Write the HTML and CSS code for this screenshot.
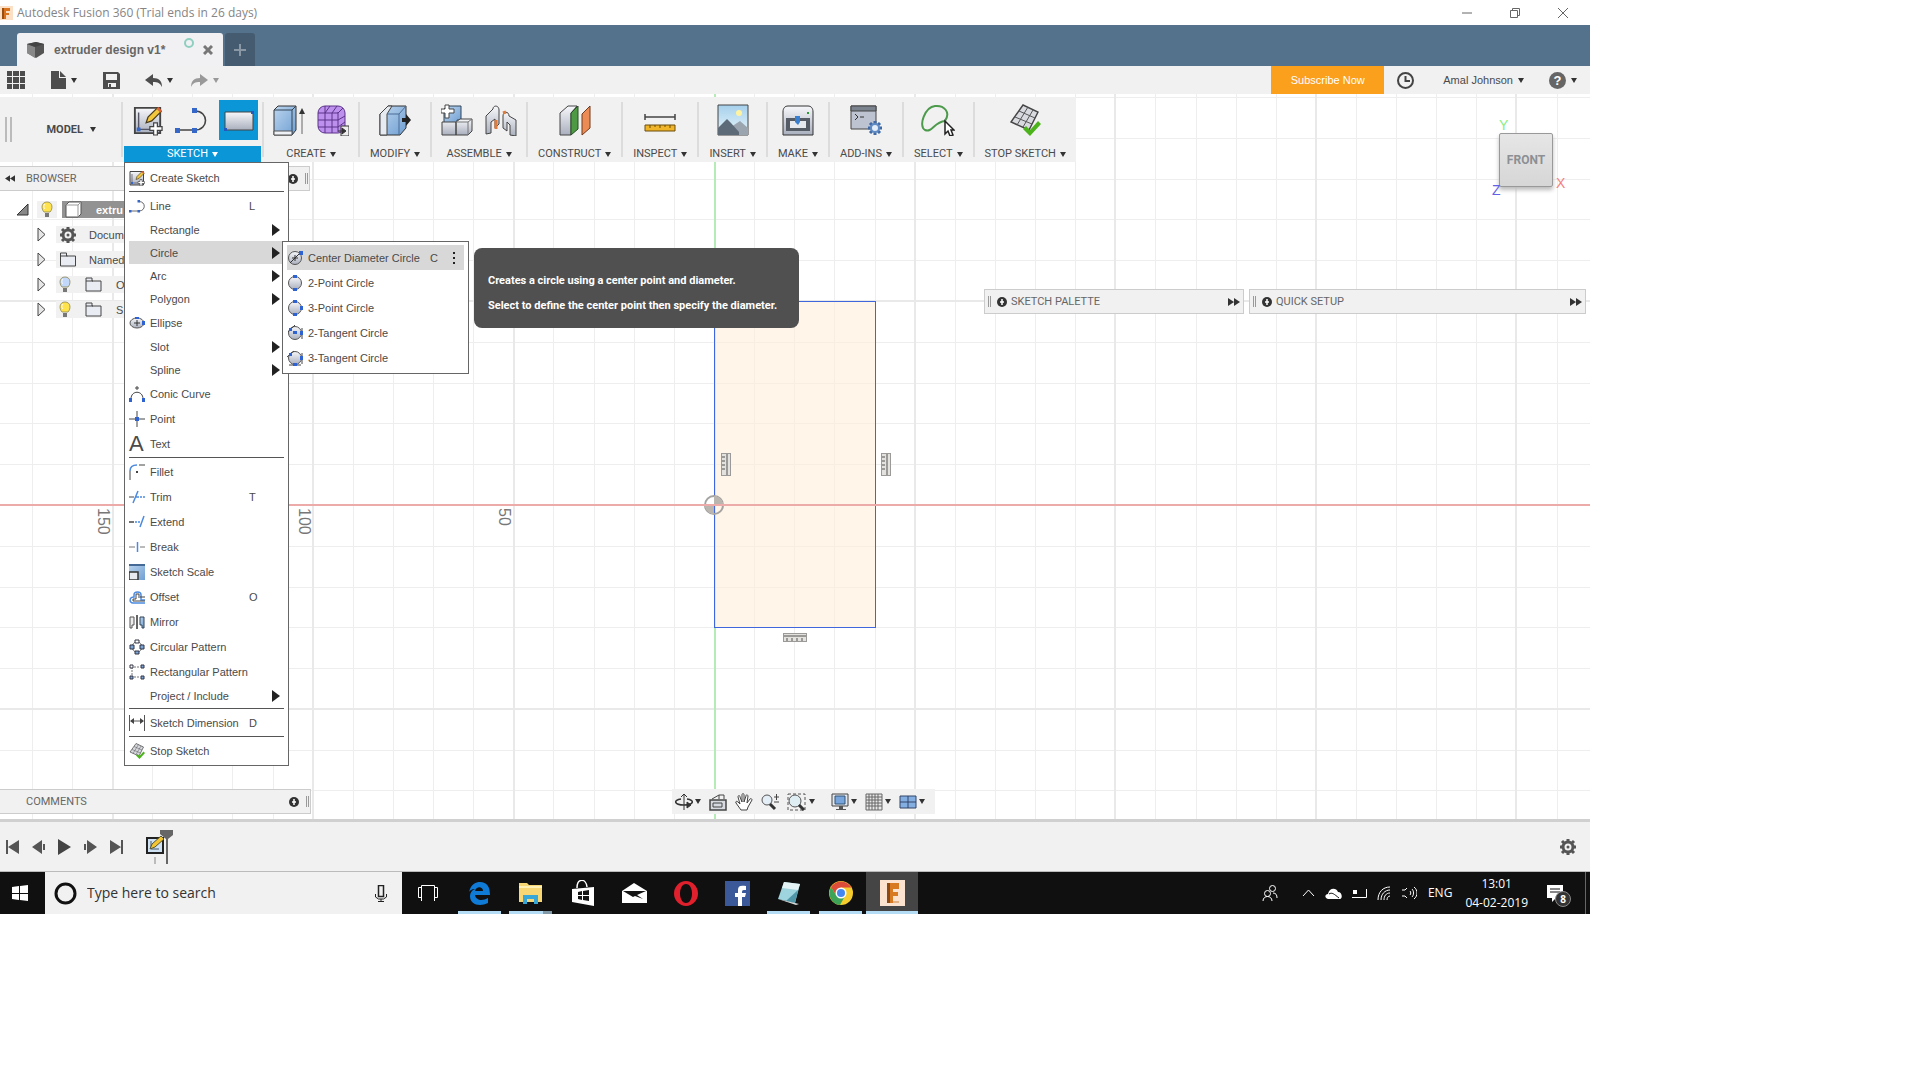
FILE: index.html
```html
<!DOCTYPE html>
<html lang="en">
<head>
    <meta charset="UTF-8">
    <meta name="viewport" content="width=device-width, initial-scale=1.0">
    <title>Autodesk Fusion 360</title>
    <link rel="stylesheet" href="styles.css">
</head>
<body>
    <svg class="sprite" aria-hidden="true">
      <defs>
        <linearGradient id="blue" x1="0" y1="0" x2="1" y2="1">
          <stop offset="0" stop-color="#bcd5ef"/><stop offset="1" stop-color="#6f9fd2"/>
        </linearGradient>
        <linearGradient id="steel" x1="0" y1="0" x2="0" y2="1">
          <stop offset="0" stop-color="#f7f8fb"/><stop offset="1" stop-color="#a9afbd"/>
        </linearGradient>
        <linearGradient id="sky" x1="0" y1="0" x2="0" y2="1">
          <stop offset="0" stop-color="#a5d0ec"/><stop offset="1" stop-color="#e8f5fa"/>
        </linearGradient>
      </defs>
      <symbol id="i-sketch" viewBox="0 0 32 32">
        <path d="M2 3h27v27H2z" fill="url(#steel)" stroke="#444" stroke-width="2"/>
        <path d="M6 8v18h16" fill="none" stroke="#556" stroke-width="1.500"/>
        <path d="M4 24h4v4H4z" fill="#3567c8"/>
        <path d="M14 19l2-6L26 3l4 4-10 10z" fill="#f3c73c" stroke="#4a3b1c" stroke-width="1.3"/>
        <path d="M25 4l2-2 4 4-2 2z" fill="#d9643a"/>
        <path d="M22 19h4v4h5v4h-5v5h-4v-5h-4v-4h4z" fill="#fff" stroke="#444" stroke-width="1.3"/>
      </symbol>
      <symbol id="i-line" viewBox="0 0 32 32">
        <path d="M3 26h17c14 0 14-19 0-19" fill="none" stroke="#444" stroke-width="1.6"/>
        <path d="M0 24h5v5H0zM17 24h5v5h-5zM17 4h5v5h-5z" fill="#3567c8"/>
      </symbol>
      <symbol id="i-stop" viewBox="0 0 32 32">
        <path d="M14 1l15 7-9 18L2 18z" fill="#d8dae0" stroke="#444" stroke-width="1.4"/>
        <path d="M19 3L8 21M24 6l-10 17M10 7l16 7M6 13l17 7" stroke="#555" fill="none"/>
        <path d="M14 25l3-3 4 4 8-9 3 3-11 12z" fill="#4db31d"/>
      </symbol>
      <symbol id="i-plus" viewBox="0 0 10 10">
        <circle cx="5" cy="5" r="5" fill="#333"/><path d="M5 2v6M3 5h4" stroke="#fff" stroke-width="1.500"/>
      </symbol>
      <symbol id="i-arrows" viewBox="0 0 12 8">
        <path d="M0 0l6 4-6 4zM6 0l6 4-6 4z" fill="#333"/>
      </symbol>
      <symbol id="i-gear" viewBox="0 0 18 18">
        <path d="M9 1v16M1 9h16M3 3l12 12M15 3L3 15" stroke="#555" stroke-width="3"/>
        <circle cx="9" cy="9" r="5" fill="#f1f1f1" stroke="#555" stroke-width="3"/><circle cx="9" cy="9" r="1.500" fill="#555"/>
      </symbol>
      <symbol id="i-bulb" viewBox="0 0 12 17">
        <path d="M3 11C0 8 0 1 6 1s6 7 3 10z" fill="currentColor" stroke="#8a8450" stroke-width=".8"/>
        <path d="M4 3c-2 2-1 4 0 5" stroke="#fff" fill="none"/><path d="M4 12h4v4H4z" fill="#777"/>
      </symbol>
      <symbol id="i-folder" viewBox="0 0 17 15">
        <path d="M1 3V1h6v3h9v10H1z" fill="#e9edf3" stroke="#444"/><path d="M1 4h7" stroke="#444"/>
      </symbol>
      <symbol id="i-expand" viewBox="0 0 9 15">
        <path d="M1 1l7 6.500L1 14z" fill="#e6e6e6" stroke="#444"/>
      </symbol>
      <symbol id="i-circle" viewBox="0 0 16 16">
        <circle cx="8" cy="8" r="6.500" fill="url(#steel)" stroke="#555"/>
      </symbol>
    </svg>

    <div class="app">
      <header class="titlebar">
        <svg class="logo" width="13" height="14" viewBox="0 0 13 14"><path d="M0 0h13v14H0z" fill="#fbe0c6"/><path d="M2 2h8v3H6v2h3v2H6v4H2z" fill="#d9731d"/><path d="M2 2h2v11H2z" fill="#9a4d12"/></svg>
        <h1>Autodesk Fusion 360 (Trial ends in 26 days)</h1>
        <div class="window-buttons">
          <button aria-label="Minimize"><svg width="10" height="10"><path d="M0 5h10" stroke="#666"/></svg></button>
          <button aria-label="Restore"><svg width="10" height="10" fill="none" stroke="#666"><path d="M.500 2.500h7v7h-7zM2.500 2V.500h7v7H8"/></svg></button>
          <button aria-label="Close"><svg width="10" height="10" stroke="#666"><path d="M0 0l10 10M10 0L0 10"/></svg></button>
        </div>
      </header>

      <nav class="tabs">
        <div class="tab">
          <svg width="17" height="16" viewBox="0 0 17 16"><path d="M0 2l9-2 8 2v9l-8 5-9-5z" fill="#555"/><path d="M0 2l8 3v11l-8-5z" fill="#888"/><path d="M0 2l9-2 8 2-9 3z" fill="#444"/></svg>
          <a href="#">extruder design v1*</a>
          <span class="tab-status"></span>
          <button aria-label="Close tab"><svg width="10" height="10" stroke="#777" stroke-width="3"><path d="M1 1l8 8M9 1L1 9"/></svg></button>
        </div>
        <button class="tab-new" aria-label="New tab"><svg width="12" height="12" stroke="#8a98a5" stroke-width="2"><path d="M6 0v12M0 6h12"/></svg></button>
      </nav>

      <div class="quickbar">
        <button class="q-grid" aria-label="Data panel"><svg width="18" height="18" fill="#4d4d4d"><path d="M0 0h5v5H0zM6 0h6v5H6zM13 0h5v5h-5zM0 6h5v6H0zM6 6h6v6H6zM13 6h5v6h-5zM0 13h5v5H0zM6 13h6v5H6zM13 13h5v5h-5z"/></svg></button>
        <button class="q-file" aria-label="File"><svg width="15" height="18" fill="#4d4d4d"><path d="M0 0h8v7h7v11H0z"/><path d="M9 0l6 6H9z"/></svg><i class="caret"></i></button>
        <button class="q-save" aria-label="Save"><svg width="17" height="17"><path d="M0 0h15l2 2v15H0z" fill="#4d4d4d"/><path d="M3 2h11v6H3zM5 11h8v4H5z" fill="#f1f1f1"/><path d="M6 12h2v3H6z" fill="#4d4d4d"/></svg></button>
        <button class="q-undo" aria-label="Undo"><svg width="17" height="13" fill="#4d4d4d"><path d="M0 6l8-6v4c6 0 9 3 9 9-2-4-4-5-9-5v4z"/></svg><i class="caret"></i></button>
        <button class="q-redo" aria-label="Redo"><svg width="17" height="13" fill="#999"><path d="M17 6L9 0v4C3 4 0 7 0 13c2-4 4-5 9-5v4z"/></svg><i class="caret"></i></button>
        <button class="subscribe">Subscribe Now</button>
        <button class="q-clock" aria-label="Job status"><svg width="17" height="17" fill="none" stroke="#444" stroke-width="2"><circle cx="8.500" cy="8.500" r="7.500"/><path d="M8.500 4v5H13"/></svg></button>
        <button class="user">Amal Johnson<i class="caret"></i></button>
        <button class="help"><b>?</b><i class="caret"></i></button>
      </div>

      <main class="workspace">
        <svg class="scene">
          <path class="minor" d="M32 0v726M72 0v726M152 0v726M192 0v726M232 0v726M273 0v726M353 0v726M393 0v726M433 0v726M473 0v726M553 0v726M594 0v726M634 0v726M674 0v726M754 0v726M794 0v726M834 0v726M875 0v726M955 0v726M995 0v726M1035 0v726M1075 0v726M1155 0v726M1196 0v726M1236 0v726M1276 0v726M1356 0v726M1396 0v726M1436 0v726M1476 0v726M1557 0v726"/>
          <path class="minor" d="M0 3h1590M0 44h1590M0 85h1590M0 125h1590M0 166h1590M0 248h1590M0 289h1590M0 329h1590M0 370h1590M0 452h1590M0 493h1590M0 533h1590M0 574h1590M0 656h1590M0 696h1590"/>
          <path class="major" d="M113 0v726M313 0v726M514 0v726M915 0v726M1115 0v726M1316 0v726M1516 0v726M0 207h1590M0 615h1590"/>
          <path d="M715 0v726" stroke="#b5ecb5" stroke-width="2"/>
          <path class="profile" d="M714 207h161v326H714z"/>
          <g fill="none" stroke="#a5a3a1" stroke-width="2">
            <circle cx="714" cy="411" r="9"/>
            <path d="M714 411v-9a9 9 0 0 1 9 9zM714 411v9a9 9 0 0 1-9-9z" fill="#bbb5af" stroke="none"/>
          </g>
          <path d="M0 411h1590" stroke="#ecaaa8" stroke-width="2"/>
          <g fill="#e4e2df" stroke="#9b9a98">
            <path d="M721 359h9v22h-9zM881 359h9v22h-9zM783 539h23v8h-23z"/>
            <path d="M727 359v22M887 359v22M783 542h23M721 363h4M721 367h4M721 371h4M721 375h4M881 363h4M881 367h4M881 371h4M881 375h4M787 544v3M792 544v3M797 544v3M802 544v3" stroke-width="2"/>
          </g>
          <g class="scale-text">
            <text transform="translate(98 414) rotate(90)">150</text>
            <text transform="translate(299 414) rotate(90)">100</text>
            <text transform="translate(499 414) rotate(90)">50</text>
          </g>
        </svg>

        <div class="ribbon">
          <div class="group model">
            <svg class="grip" width="7" height="25" stroke="#bbb" stroke-width="2"><path d="M1 0v25M6 0v25"/></svg>
            <button class="label"><b>MODEL</b><i class="caret"></i></button>
          </div>
          <span class="sep"></span>

          <div class="group sketch">
            <div class="tools">
              <button class="tool" aria-label="Create Sketch"><svg width="30" height="32"><use href="#i-sketch"/></svg></button>
              <button class="tool" aria-label="Line"><svg width="32" height="32"><use href="#i-line"/></svg></button>
              <button class="tool active" aria-label="Rectangle"><svg width="32" height="32"><path d="M2 8h28v18H2z" fill="url(#steel)" stroke="#444"/><path d="M28 7h3v3h-3zM1 24h3v3H1z" fill="#2559c0"/></svg></button>
            </div>
            <button class="label">SKETCH<i class="caret"></i></button>

            <ul class="menu">
              <li><button><svg><use href="#i-sketch"/></svg><span>Create Sketch</span></button></li>
              <li class="rule"></li>
              <li><button><svg><use href="#i-line"/></svg><span>Line</span><kbd>L</kbd></button></li>
              <li class="plain"><button><span>Rectangle</span><i class="more"></i></button></li>
              <li class="plain open">
                <button><span>Circle</span><i class="more"></i></button>
                <ul class="submenu">
                  <li class="current">
                    <button><svg viewBox="0 0 16 16"><use href="#i-circle"/><path d="M3 13L14 2M8 5v6M5 8h6" stroke="#333"/><path d="M12 1h4v4h-4z" fill="#2e62d0"/></svg><span>Center Diameter Circle</span><kbd>C</kbd><i class="dots"></i></button>
                    <div class="tooltip">
                      <p>Creates a circle using a center point and diameter.</p>
                      <p>Select to define the center point then specify the diameter.</p>
                    </div>
                  </li>
                  <li><button><svg viewBox="0 0 16 16"><use href="#i-circle"/><path d="M6 0h4v3H6zM6 13h4v3H6z" fill="#2e62d0"/></svg><span>2-Point Circle</span></button></li>
                  <li><button><svg viewBox="0 0 16 16"><use href="#i-circle"/><path d="M6 0h4v3H6zM6 13h4v3H6zM13 6h3v4h-3z" fill="#2e62d0"/></svg><span>3-Point Circle</span></button></li>
                  <li><button><svg viewBox="0 0 16 16"><use href="#i-circle"/><path d="M1 7l7-7M15 3v11" stroke="#444"/><path d="M6 6h4v3H6zM2 3h3v3H2zM13 6h3v4h-3z" fill="#2e62d0"/></svg><span>2-Tangent Circle</span></button></li>
                  <li><button><svg viewBox="0 0 16 16"><use href="#i-circle"/><path d="M0 7l7-6M15 3v11M2 15h12" stroke="#444"/><path d="M6 13h4v3H6zM2 3h3v3H2zM13 6h3v4h-3z" fill="#2e62d0"/></svg><span>3-Tangent Circle</span></button></li>
                </ul>
              </li>
              <li class="plain"><button><span>Arc</span><i class="more"></i></button></li>
              <li class="plain"><button><span>Polygon</span><i class="more"></i></button></li>
              <li><button><svg viewBox="0 0 16 16"><ellipse cx="8" cy="8" rx="7" ry="5" fill="url(#steel)" stroke="#555"/><path d="M8 5v6M5 8h6" stroke="#333"/><path d="M6 2h4v2H6zM13 6h3v4h-3z" fill="#2e62d0"/></svg><span>Ellipse</span></button></li>
              <li class="plain"><button><span>Slot</span><i class="more"></i></button></li>
              <li class="plain"><button><span>Spline</span><i class="more"></i></button></li>
              <li><button><svg viewBox="0 0 16 16"><path d="M2 13C2 4 14 4 14 13M8 0v4M6 2h4" fill="none" stroke="#444"/><path d="M0 12h3v4H0zM13 12h3v4h-3z" fill="#2e62d0"/></svg><span>Conic Curve</span></button></li>
              <li><button><svg viewBox="0 0 16 16"><path d="M8 0v16M0 8h16" stroke="#444"/><path d="M6 6h4v4H6z" fill="#2e62d0"/></svg><span>Point</span></button></li>
              <li><button><em>A</em><span>Text</span></button></li>
              <li class="rule"></li>
              <li><button><svg viewBox="0 0 16 16"><path d="M1 16V7" stroke="#444"/><path d="M1 7c0-4 2-6 7-6" fill="none" stroke="#4c8ae0" stroke-width="1.500"/><path d="M10 1h6" stroke="#444"/><path d="M7 7h2v2H7z" fill="#444"/></svg><span>Fillet</span></button></li>
              <li><button><svg viewBox="0 0 16 16"><path d="M0 8h5" stroke="#444"/><path d="M4 14l5-12M7 8h3M11 8h2M14 8h2" stroke="#4c8ae0" stroke-width="1.500"/></svg><span>Trim</span><kbd>T</kbd></button></li>
              <li><button><svg viewBox="0 0 16 16"><path d="M0 8h5" stroke="#444" stroke-width="1.500"/><path d="M6 8h2M9 8h2M11 13l4-11" stroke="#4c8ae0" stroke-width="1.500"/></svg><span>Extend</span></button></li>
              <li><button><svg viewBox="0 0 16 16"><path d="M0 8h6M11 8h5" stroke="#777"/><path d="M8.500 3v10" stroke="#4c8ae0" stroke-width="1.500"/></svg><span>Break</span></button></li>
              <li><button><svg viewBox="0 0 16 16"><path d="M0 0h16v16H0z" fill="url(#blue)"/><path d="M0 0h16v2H0z" fill="#456a96"/><path d="M0 8h9v8H0z" fill="#e6eaf0" stroke="#333" stroke-width="1.500"/></svg><span>Sketch Scale</span></button></li>
              <li><button><svg viewBox="0 0 16 16" fill="none"><path d="M16 11h-4V6c0-4-7-4-7 0v2c-5 0-5 6-1 6h12" stroke="#4c8ae0" stroke-width="1.500"/><path d="M16 8h-5M10 9V5H7v5H4v2h12" stroke="#444"/></svg><span>Offset</span><kbd>O</kbd></button></li>
              <li><button><svg viewBox="0 0 16 16"><path d="M8 1v14" stroke="#333" stroke-width="1.500"/><path d="M1 3h4v8H3v3H1z" fill="#eee" stroke="#555"/><path d="M15 3h-4v8h2v3h2z" fill="url(#blue)" stroke="#345"/></svg><span>Mirror</span></button></li>
              <li><button><svg viewBox="0 0 16 16" fill="#7ba6d8" stroke="#334"><circle cx="8" cy="8" r="5" fill="none" stroke="#777"/><path d="M6 1h4v3H6z" fill="#fff"/><path d="M1 6h4v4H1zM11 6h4v4h-4zM6 12h4v3H6z"/></svg><span>Circular Pattern</span></button></li>
              <li><button><svg viewBox="0 0 16 16" fill="#7ba6d8" stroke="#334"><path d="M3 3v10M5 3h6M5 13h6" fill="none" stroke="#777" stroke-dasharray="2 1"/><path d="M1 1h3v3H1z" fill="#fff"/><path d="M12 1h3v3h-3zM1 12h3v3H1zM12 12h3v3h-3z"/></svg><span>Rectangular Pattern</span></button></li>
              <li class="plain"><button><span>Project / Include</span><i class="more"></i></button></li>
              <li class="rule"></li>
              <li><button><svg viewBox="0 0 16 16"><path d="M.500 0v16M15.500 0v16M2 6h12" stroke="#555"/><path d="M1 6l4-3v6zM15 6l-4-3v6z" fill="#444"/></svg><span>Sketch Dimension</span><kbd>D</kbd></button></li>
              <li class="rule"></li>
              <li><button><svg><use href="#i-stop"/></svg><span>Stop Sketch</span></button></li>
            </ul>
          </div>
          <span class="sep"></span>

          <div class="group pair">
            <div class="tools">
              <button class="tool" aria-label="Extrude"><svg width="32" height="32"><path d="M1 6l4-4h18v24l-4 5H1z" fill="url(#blue)" stroke="#333"/><path d="M1 6h18v25M19 6l4-4" fill="none" stroke="#345"/><path d="M1 27h18v4H1z" fill="#eef1f6" stroke="#555"/><path d="M29 8v22" stroke="#666"/><path d="M26 10l3-6 3 6z" fill="#333"/></svg></button>
              <button class="tool" aria-label="Create Form"><svg width="32" height="32"><rect x="1" y="2" width="27" height="27" rx="7" fill="#bd90ee" stroke="#5a3388"/><path d="M8 2v27M15 9v20M21 8v20M1 9h20l5-5M1 16h20l7-4M1 23h20l7-5M8 9l5-7M15 9l5-7" fill="none" stroke="#5a3388"/><path d="M24 22h8v10h-8z" fill="#eee" stroke="#333"/><path d="M21 27h6M25 24l4 3-4 3z" stroke="#333" fill="#333"/></svg></button>
            </div>
            <button class="label">CREATE<i class="caret"></i></button>
          </div>
          <span class="sep"></span>
          <div class="group">
            <div class="tools">
              <button class="tool" aria-label="Press Pull"><svg width="32" height="32"><path d="M1 10l8-8h18v22l-6 7H1z" fill="url(#blue)" stroke="#333"/><path d="M1 10l8-8h4l-5 8v21H1z" fill="#e6ebf2" stroke="#444"/><path d="M8 10h12v21M20 10l7-8" fill="none" stroke="#4a6c96"/><path d="M23 14h4v-4l5 6-5 6v-4h-4z" fill="#222"/></svg></button>
            </div>
            <button class="label">MODIFY<i class="caret"></i></button>
          </div>
          <span class="sep"></span>
          <div class="group pair">
            <div class="tools">
              <button class="tool" aria-label="New Component"><svg width="32" height="32"><path d="M3 5l3-3h14v14h-4v3H3z" fill="url(#blue)" stroke="#345"/><path d="M1 18h14v13H1zM15 18l4-3h12v12l-4 4H15z" fill="url(#steel)" stroke="#444"/><path d="M15 18h12v13M27 18l4-3" fill="none" stroke="#777"/><path d="M4 1h4v4h5v4H8v5H4V9H0V5h4z" fill="#fff" stroke="#444"/></svg></button>
              <button class="tool" aria-label="Joint"><svg width="32" height="32"><path d="M1 12L8 5c0-4 6-4 6 1v14l-4 4v-9l-4 3v11l-5 1z" fill="url(#steel)" stroke="#444"/><path d="M31 16l-7-4c0-5-6-5-6 0v12l4 3v-9l3 3v10l6 1z" fill="url(#steel)" stroke="#444"/><path d="M11 16v9M18 9l3-1" stroke="#df7c3d" stroke-width="3"/></svg></button>
            </div>
            <button class="label">ASSEMBLE<i class="caret"></i></button>
          </div>
          <span class="sep"></span>
          <div class="group">
            <div class="tools">
              <button class="tool" aria-label="Offset Plane"><svg width="32" height="32"><path d="M1 9l8-7h9l-6 7v22H1z" fill="url(#steel)" stroke="#444"/><path d="M12 9l7-7v23l-7 6z" fill="#4e9a44" stroke="#264f22"/><path d="M23 10l8-8v22l-8 7z" fill="#ed8b54" stroke="#6f3a1d"/></svg></button>
            </div>
            <button class="label">CONSTRUCT<i class="caret"></i></button>
          </div>
          <span class="sep"></span>
          <div class="group">
            <div class="tools">
              <button class="tool" aria-label="Measure"><svg width="32" height="32"><path d="M1 13h30M1 10v6M31 10v6" stroke="#444" stroke-width="1.500"/><path d="M1 21h30v6H1z" fill="#f0b429" stroke="#6b4d0d"/><path d="M6 21v3M11 21v2M16 21v3M21 21v2M26 21v3" stroke="#6b4d0d"/></svg></button>
            </div>
            <button class="label">INSPECT<i class="caret"></i></button>
          </div>
          <span class="sep"></span>
          <div class="group">
            <div class="tools">
              <button class="tool" aria-label="Insert image"><svg width="32" height="32"><path d="M1 1h30v30H1z" fill="url(#sky)" stroke="#444"/><circle cx="22" cy="9" r="3" fill="#fff3a0"/><path d="M14 23l9-6 8 7v7H14z" fill="#9aa5b0"/><path d="M1 24l9-9 4 4 8 9v3H1z" fill="#5d6a78"/></svg></button>
            </div>
            <button class="label">INSERT<i class="caret"></i></button>
          </div>
          <span class="sep"></span>
          <div class="group">
            <div class="tools">
              <button class="tool" aria-label="3D Print"><svg width="32" height="32"><path d="M1 8c0-4 2-6 5-6h20c3 0 5 2 5 6v23H1z" fill="url(#steel)" stroke="#333"/><path d="M4 14h24v13H4z" fill="#555c66"/><path d="M8 17h16v7H8z" fill="#e6e9ee"/><path d="M13 12h5v6l-2 3-3-3z" fill="#397fd1"/><path d="M25 8h2v2h-2z" fill="#2b9c37"/></svg></button>
            </div>
            <button class="label">MAKE<i class="caret"></i></button>
          </div>
          <span class="sep"></span>
          <div class="group">
            <div class="tools">
              <button class="tool" aria-label="Scripts and Add-Ins"><svg width="32" height="32"><path d="M1 2h25v23H1z" fill="#bdc3d1" stroke="#444"/><path d="M1 2h25v5H1z" fill="#7b838f" stroke="#444"/><path d="M5 10l3 3-3 3M10 13h4" fill="none" stroke="#333"/><path d="M25 17v14M18 24h14M20 19l10 10M30 19L20 29" stroke="#3f6aa6" stroke-width="3"/><circle cx="25" cy="24" r="4" fill="#e4edf8" stroke="#5f8ac3" stroke-width="2"/></svg></button>
            </div>
            <button class="label">ADD-INS<i class="caret"></i></button>
          </div>
          <span class="sep"></span>
          <div class="group">
            <div class="tools">
              <button class="tool" aria-label="Select"><svg width="34" height="32"><path d="M24 17c6-9-1-16-10-15C4 3-3 22 4 26c7 3 9-8 20-9z" fill="none" stroke="#4c9a4c" stroke-width="2"/><path d="M24 17v13l3-3 2 5 3-1-2-5h3z" fill="#fff" stroke="#222" stroke-width="1.500"/></svg></button>
            </div>
            <button class="label">SELECT<i class="caret"></i></button>
          </div>
          <span class="sep"></span>
          <div class="group">
            <div class="tools">
              <button class="tool" aria-label="Stop Sketch"><svg width="32" height="32"><use href="#i-stop"/></svg></button>
            </div>
            <button class="label">STOP SKETCH<i class="caret"></i></button>
          </div>
        </div>

        <div class="stage">
          <aside class="browser">
            <div class="panel">
              <svg class="flip" width="10" height="7"><use href="#i-arrows"/></svg>
              <span class="panel-title">BROWSER</span>
              <svg class="push" width="10" height="10"><use href="#i-plus"/></svg>
              <i class="grip-line"></i>
            </div>
            <ul class="tree">
              <li class="root"><svg width="12" height="12"><path d="M11 0v11H0z" fill="#888" stroke="#333"/></svg><span class="bulb on"><svg width="12" height="17"><use href="#i-bulb"/></svg></span><div class="node"><svg width="17" height="17" viewBox="0 0 17 17"><path d="M1 4l3-3h12v12l-3 3H1z" fill="#fff" stroke="#555"/><path d="M1 4h12v12M13 4l3-3" fill="none" stroke="#999"/></svg><b>extru</b></div></li>
              <li><svg width="9" height="15"><use href="#i-expand"/></svg><div class="node"><svg width="18" height="18"><use href="#i-gear"/></svg><span>Docum</span></div></li>
              <li><svg width="9" height="15"><use href="#i-expand"/></svg><div class="node"><svg width="18" height="15"><use href="#i-folder"/></svg><span>Named</span></div></li>
              <li class="deep"><svg width="9" height="15"><use href="#i-expand"/></svg><div class="node"><svg class="off" width="12" height="17"><use href="#i-bulb"/></svg><svg width="17" height="15"><use href="#i-folder"/></svg><span>O</span></div></li>
              <li class="deep"><svg width="9" height="15"><use href="#i-expand"/></svg><div class="node"><svg class="on" width="12" height="17"><use href="#i-bulb"/></svg><svg width="17" height="15"><use href="#i-folder"/></svg><span>S</span></div></li>
            </ul>
          </aside>

          <div class="palettes">
            <div class="panel">
              <i class="grip-line"></i>
              <svg width="10" height="10"><use href="#i-plus"/></svg>
              <span class="panel-title">SKETCH PALETTE</span>
              <svg class="push" width="12" height="8"><use href="#i-arrows"/></svg>
            </div>
            <div class="panel wide">
              <i class="grip-line"></i>
              <svg width="10" height="10"><use href="#i-plus"/></svg>
              <span class="panel-title">QUICK SETUP</span>
              <svg class="push" width="12" height="8"><use href="#i-arrows"/></svg>
            </div>
          </div>
        </div>

        <div class="viewcube">
          <div class="face">FRONT</div>
          <span class="axis-y">Y</span>
          <span class="axis-x">X</span>
          <span class="axis-z">Z</span>
        </div>

        <div class="bottom-row">
          <div class="panel comments">
            <span class="panel-title">COMMENTS</span>
            <svg class="push" width="10" height="10"><use href="#i-plus"/></svg>
            <i class="grip-line"></i>
          </div>
          <div class="navbar">
            <button aria-label="Orbit"><svg width="18" height="18" fill="none" stroke="#333"><path d="M9 1v16M6 4l3-3 3 3"/><path d="M12 6c8 1 7 6-3 6S-2 7 6 6" stroke-width="1.500"/><path d="M12 9l4 3-4 3z" fill="#333"/></svg><i class="caret"></i></button>
            <button aria-label="Look At"><svg width="18" height="18" fill="#d6dae0" stroke="#444"><path d="M1 7h16v10H1z" stroke-width="1.500"/><path d="M4 10h9v4H4z"/><path d="M3 6l7-4v4M10 2h5v4" fill="none"/></svg></button>
            <button aria-label="Pan"><svg width="18" height="18"><path d="M6 17L1 10c-1-2 1-2 2-1l2 2L3 4c0-2 2-2 2 0l2 5V2c0-2 2-2 2 0v7l2-6c0-2 2-1 2 0l-1 7 3-4c1-1 2 0 2 1l-4 7-1 3z" fill="#fff" stroke="#444"/></svg></button>
            <button aria-label="Zoom"><svg width="18" height="18"><circle cx="6" cy="7" r="5" fill="#e3eef6" stroke="#555"/><path d="M9 11l5 5" stroke="#333" stroke-width="3"/><path d="M13 4h5M15.500 1v6M13 9h5" stroke="#444"/></svg></button>
            <button aria-label="Fit"><svg width="20" height="18"><path d="M1 1h17v16H1z" fill="none" stroke="#555" stroke-dasharray="3 2"/><circle cx="8" cy="8" r="6" fill="#dfeef3" stroke="#555"/><path d="M12 12l5 5" stroke="#333" stroke-width="3"/></svg><i class="caret"></i></button>
            <button class="display" aria-label="Display Settings"><svg width="18" height="18"><path d="M1 1h16v12H1z" fill="#e3e6ea" stroke="#444"/><path d="M4 3h10v8H4z" fill="#78a5dc" stroke="#357"/><path d="M8 13h4v3h3v1H5v-1h3z" fill="#555"/></svg><i class="caret"></i></button>
            <button aria-label="Grid"><svg width="18" height="18" stroke="#666"><path d="M1 1h16v16H1z" fill="#e8e8e8"/><path d="M4 1v16M7 1v16M10 1v16M13 1v16M1 4h16M1 7h16M1 10h16M1 13h16"/></svg><i class="caret"></i></button>
            <button aria-label="Viewports"><svg width="18" height="14"><path d="M1 1h16v12H1z" fill="#83aee2" stroke="#346"/><path d="M9 1v12M1 7h16" stroke="#346"/></svg><i class="caret"></i></button>
          </div>
        </div>
      </main>

      <footer class="timeline">
        <button aria-label="Go to start"><svg width="13" height="14" fill="#555"><path d="M0 0h2v14H0zM13 0v14L2 7z"/></svg></button>
        <button aria-label="Step back"><svg width="13" height="14" fill="#555"><path d="M10 0v14L0 7zM11 4h2v6h-2z"/></svg></button>
        <button aria-label="Play"><svg width="13" height="16" fill="#444"><path d="M0 0l13 8-13 8z"/></svg></button>
        <button aria-label="Step forward"><svg width="13" height="14" fill="#555"><path d="M3 0v14l10-7zM0 4h2v6H0z"/></svg></button>
        <button aria-label="Go to end"><svg width="13" height="14" fill="#555"><path d="M11 0h2v14h-2zM0 0v14l11-7z"/></svg></button>
        <button class="feature" aria-label="Sketch1"><svg width="28" height="34"><path d="M1 8h16v15H1z" fill="#cfe2f3" stroke="#222" stroke-width="2"/><path d="M5 11v8h8" fill="none" stroke="#456"/><path d="M4 19l2-5 9-8 3 3-9 8z" fill="#f5c531" stroke="#553"/><path d="M8 27h2v7H8z" fill="#bbb"/><path d="M14 0h13v5l-5 4v25h-2V9l-6-5z" fill="#666"/></svg></button>
        <button class="settings" aria-label="Timeline settings"><svg width="18" height="18"><use href="#i-gear"/></svg></button>
      </footer>

      <div class="taskbar">
        <button class="start" aria-label="Start"><svg width="16" height="16" fill="#fff"><path d="M0 2l7-1v7H0zM8 1l8-1v8H8zM0 9h7v6l-7-1zM8 9h8v7l-8-1z"/></svg></button>
        <div class="search">
          <svg width="23" height="23"><circle cx="11.500" cy="11.500" r="9.500" fill="none" stroke="#111" stroke-width="3"/></svg>
          <input type="text" aria-label="Search" placeholder="Type here to search">
          <svg width="12" height="17" fill="none" stroke="#222"><rect x="3.500" y=".500" width="5" height="11" stroke-width="1.500"/><path d="M.500 9v3l3 2h5l3-2V9M6 14v3M3 16.500h6"/></svg>
        </div>
        <div class="pinned">
          <button aria-label="Task View"><svg width="20" height="16" fill="none" stroke="#fff"><path d="M3.500 16V.500h13V16M3 2.500H.500v10H3M17 2.500h2.500v10H17"/></svg></button>
          <button class="running" aria-label="Edge"><svg width="22" height="23"><path d="M1 10C3 2 8 0 12 0c7 0 10 5 10 13H7c1 6 8 6 13 3v5C12 25 2 23 2 14c0-3 2-6 5-7-4 0-5 2-6 3zm6-1h8c0-5-7-5-8 0z" fill="#0f7bd7"/></svg></button>
          <button class="running stack" aria-label="File Explorer"><svg width="23" height="22"><path d="M0 1h8l2 2h13v17H0z" fill="#f7d774"/><path d="M0 4h23v2H0z" fill="#fff0b5"/><path d="M4 13h15v9h-4v-5H8v5H4z" fill="#37a7d8"/></svg></button>
          <button aria-label="Store"><svg width="22" height="26"><path d="M0 9l22-2v19L0 22z" fill="#fff"/><path d="M5 8c0-10 9-10 10-1" fill="none" stroke="#fff" stroke-width="1.500"/><path d="M6 12l4-1v4H6zM11 11l6-1v5h-6zM6 16h4v4l-4-1zM11 16h6v5l-6-1z" fill="#141414"/></svg></button>
          <button aria-label="Mail"><svg width="25" height="20"><path d="M0 8l12-8 13 8v12H0z" fill="#fff"/><path d="M1 8h23l-9 4 6 4-8-3-2 1z" fill="#141414"/></svg></button>
          <button aria-label="Opera"><svg width="24" height="25"><path d="M12 0a12 12.500 0 1 0 0 25a12 12.500 0 1 0 0-25zm0 3c8 0 8 19 0 19s-8-19 0-19z" fill="#e0202d"/></svg></button>
          <button aria-label="Facebook"><svg width="25" height="25"><path d="M0 0h25v25H0z" fill="#3b5998"/><path d="M13 25v-9h-3v-4h3V9c0-4 2-5 8-4v4h-2c-2 0-2 1-2 3h4l-1 4h-3v9z" fill="#fff"/></svg></button>
          <button class="running" aria-label="Notepad"><svg width="22" height="23"><path d="M6 0l16 2-5 19L0 17z" fill="#9ed4dd"/><path d="M6 0l16 2-2 6L4 6z" fill="#e4f3f5"/><path d="M8 19L20 8l-3 13z" fill="#4f97a8"/><path d="M0 17l17 4 4 1-3 1z" fill="#d5d9da"/></svg></button>
          <button class="running" aria-label="Chrome"><svg width="24" height="24"><circle cx="12" cy="12" r="12" fill="#f7cd2e"/><path d="M2 6a12 12 0 0 1 20.500 0.500H12L7 14z" fill="#dd4b39"/><path d="M2 6a12 12 0 0 0 9 18l5-9-9-1z" fill="#3da457"/><circle cx="12" cy="12" r="5.500" fill="#fff"/><circle cx="12" cy="12" r="4" fill="#4587f0"/></svg></button>
          <button class="running focused" aria-label="Fusion 360"><svg width="25" height="26"><path d="M0 0h25v26H0z" fill="#fbe3cf"/><path d="M7 3h12v6h-6v3h5v4h-5v7H7z" fill="#d77a22"/><path d="M7 3h3v20H7z" fill="#8e4a15"/><path d="M13 21h6v2h-6z" fill="#e5b285"/></svg></button>
        </div>
        <div class="tray">
          <button class="people" aria-label="People"><svg width="16" height="17" fill="none" stroke="#fff"><circle cx="10.500" cy="3.500" r="3"/><circle cx="5.500" cy="8.500" r="3"/><path d="M1 16c0-6 9-6 9 0M11 8c3 0 4 2 4 5"/></svg></button>
          <button aria-label="Show hidden icons"><svg width="13" height="8" fill="none" stroke="#fff"><path d="M1 7l5.500-6L12 7"/></svg></button>
          <button aria-label="OneDrive"><svg width="17" height="11" fill="#fff"><path d="M3 11C-1 10 0 6 3 6 4 0 11-1 13 4c4 0 5 6 2 7z"/><path d="M4 6c3-2 5 0 10 4" fill="none" stroke="#111"/></svg></button>
          <button aria-label="Battery"><svg width="15" height="10"><path d="M0 9.500h14.500V1" stroke="#fff" fill="none"/><path d="M1 2h4v4H1z" fill="#fff"/></svg></button>
          <button aria-label="Network"><svg width="14" height="14" fill="none" stroke="#fff"><path d="M1 14C1 6 6 1 13 1M4 14c0-6 4-10 9-10M7 14c0-4 2-7 6-7M10 14c0-2 1-4 3-4"/></svg></button>
          <button aria-label="Volume"><svg width="16" height="14" fill="none" stroke="#fff"><path d="M1 4h3M1 10h3l2 2M6 2L4 4M9 5c1 1 1 3 0 4M11 3c2 2 2 6 0 8M13 1c4 3 4 9 0 12"/></svg></button>
          <button class="lang">ENG</button>
          <button class="clock"><span>13:01</span><span>04-02-2019</span></button>
          <button class="notices" aria-label="Notifications"><svg width="16" height="17"><path d="M0 0h16v13H9l-4 4v-4H0z" fill="#fff"/><path d="M3 4h10M3 7h10" stroke="#111"/></svg><b>8</b></button>
        </div>
      </div>
    </div>
</body>
</html>
```
FILE: styles.css
```css
* {
  box-sizing: border-box;
}

body {
  margin: 0;
  font: 11px/16px "Liberation Sans", Arial, sans-serif;
  color: #4a4a4a;
  background: #fff;
}

button {
  display: flex;
  align-items: center;
  justify-content: center;
  padding: 0;
  border: 0;
  font: inherit;
  color: inherit;
  background: none;
  white-space: nowrap;
}

ul {
  margin: 0;
  padding: 0;
  list-style: none;
}

svg {
  display: block;
  flex: none;
}

.sprite {
  position: absolute;
  width: 0;
  height: 0;
}

.app {
  width: 100%;
  max-width: 1590px;
}

.caret {
  width: 0;
  height: 0;
  border: 3px solid transparent;
  border-top: 5px solid #333;
  border-bottom: 0;
}

/* title bar and tabs */
.titlebar {
  display: flex;
  align-items: center;
  height: 25px;
}
.titlebar h1 {
  margin: 0 0 0 4px;
  font: 12px/16px "Open Sans", sans-serif;
  color: #858585;
}
.window-buttons {
  display: flex;
  gap: 38px;
  margin: 0 22px 0 auto;
}

.tabs {
  display: flex;
  align-items: flex-end;
  gap: 2px;
  height: 41px;
  padding-left: 17px;
  background: #55728d;
}
.tab {
  display: flex;
  align-items: center;
  width: 206px;
  height: 33px;
  padding: 0 10px;
  border-radius: 3px 3px 0 0;
  background: #f1f1f3;
}
.tab a {
  margin-left: 10px;
  font-size: 12px;
  font-weight: bold;
  color: #666;
  text-decoration: none;
}
.tab-status {
  width: 10px;
  height: 10px;
  margin: 0 9px 14px auto;
  border: 2px solid #8fcfc0;
  border-radius: 50%;
}
.tab-new {
  width: 30px;
  height: 33px;
  border-radius: 3px 3px 0 0;
  background: #455b70;
}

/* quick access bar */
.quickbar {
  display: flex;
  align-items: center;
  height: 28px;
  padding: 0 13px 0 7px;
  background: #f1f1f1;
}
.quickbar .caret {
  margin-left: 5px;
}
.q-file {
  margin-left: 26px;
}
.q-save {
  margin-left: 26px;
}
.q-undo {
  margin-left: 25px;
}
.q-redo {
  margin-left: 18px;
}
.q-redo .caret {
  border-top-color: #999;
}
.subscribe {
  align-self: stretch;
  width: 113px;
  margin-left: auto;
  color: #fff;
  background: #fba01d;
}
.q-clock {
  margin: 0 29px 0 13px;
}
.help {
  margin-left: 25px;
}
.help b {
  width: 17px;
  border-radius: 50%;
  font-size: 13px;
  line-height: 17px;
  color: #fff;
  background: #666;
}

/* canvas */
.workspace {
  position: relative;
  display: flex;
  flex-direction: column;
  min-height: 725px;
  padding-top: 3px;
}
.scene {
  position: absolute;
  inset: 0;
  width: 100%;
  height: 100%;
  shape-rendering: crispEdges;
}
.scene circle {
  shape-rendering: auto;
}
.minor {
  stroke: #eee;
}
.major {
  stroke: #e9e9e9;
  stroke-width: 2;
}
.profile {
  fill: #ffefdb;
  fill-opacity: 0.6;
  stroke: #3f66dd;
}
.scale-text {
  font-size: 16px;
  fill: #777;
}

/* ribbon */
.ribbon {
  position: relative;
  z-index: 2;
  display: flex;
  align-self: flex-start;
  height: 65px;
  background: #f1f1f1;
}
.sep {
  width: 2px;
  margin: 5px 0;
  background: #dcdcdc;
}
.group {
  display: flex;
  flex-direction: column;
  align-items: center;
  justify-content: space-between;
  padding: 3px 10px 0;
}
.group.pair {
  padding: 3px 9px 0;
}
.group.model {
  flex-direction: row;
  width: 121px;
  padding: 0 25px 0 5px;
}
.tools {
  display: flex;
  align-items: center;
  gap: 12px;
}
.tool {
  height: 40px;
}
.tool.active {
  width: 40px;
  background: #0a96d7;
}
.label {
  height: 16px;
  font-family: Roboto, sans-serif;
}
.label .caret {
  margin-left: 4px;
}
.model .caret {
  margin-left: 7px;
}
.sketch {
  position: relative;
  align-items: stretch;
  width: 139px;
}
.group.sketch {
  padding: 3px 1px 0;
}
.sketch .tools {
  padding: 0 3px 0 9px;
}
.sketch > .label {
  color: #fff;
  background: #0a96d7;
}
.sketch > .label .caret {
  border-top-color: #fff;
}

/* sketch menu */
.menu,
.submenu {
  position: absolute;
  border: 1px solid #666;
  color: #4a4a4a;
  background: #fff;
}
.menu {
  top: 65px;
  left: 1px;
  padding: 2px 4px;
}
.menu li {
  position: relative;
}
.menu .rule {
  height: 1px;
  margin: 1px 0;
  background: #555;
}
.menu button {
  display: grid;
  grid-template-columns: 16px 94px 18px 8px;
  justify-content: start;
  gap: 5px;
  width: 155px;
  height: 25px;
  text-align: left;
}
.menu .plain > button {
  height: 23px;
}
.menu span {
  grid-column: 2;
}
.menu svg {
  width: 16px;
  height: 16px;
}
.menu em {
  font-size: 22px;
  font-style: normal;
}
.menu kbd {
  font: inherit;
}
.more {
  grid-column: 4;
  border: 6px solid transparent;
  border-left: 8px solid #222;
  border-right: 0;
}
.menu .open > button,
.menu .current > button {
  background: #d8d8d8;
}
.menu .submenu {
  top: 0;
  left: 153px;
  z-index: 1;
  padding: 3px 4px;
}
.menu .submenu button {
  grid-template-columns: 16px 117px 18px 8px;
  width: 177px;
}
.dots {
  width: 2px;
  height: 12px;
  background: repeating-linear-gradient(#222 0 2px, transparent 2px 5px);
}
.tooltip {
  position: absolute;
  top: 3px;
  left: 187px;
  padding: 20px 22px 10px 14px;
  border-radius: 8px;
  font: bold 11px/25px Roboto, sans-serif;
  color: #fff;
  background: #505050;
  white-space: nowrap;
}
.tooltip p {
  margin: 0;
}

/* panels */
.stage {
  position: relative;
  display: flex;
  flex: 1;
  justify-content: space-between;
  padding: 4px 4px 0 0;
}
.panel {
  display: flex;
  align-items: center;
  height: 25px;
  padding: 0 3px;
  border: 1px solid #ccc;
  background: #f1f1f1;
}
.panel-title {
  font-family: Roboto, sans-serif;
  color: #666;
}
.push {
  margin-left: auto;
}
.grip-line {
  width: 3px;
  height: 11px;
  border: solid #999;
  border-width: 0 1px;
}
.browser {
  width: 310px;
}
.browser .panel,
.comments {
  padding-right: 1px;
  border-left: 0;
}
.browser .flip {
  margin: 0 11px 0 2px;
  transform: scaleX(-1);
}
.browser .grip-line,
.comments .grip-line {
  margin-left: 7px;
}
.palettes {
  display: flex;
  gap: 5px;
  margin-top: 123px;
}
.palettes .panel {
  width: 260px;
}
.palettes .wide {
  width: 337px;
}
.palettes .panel > svg:not(.push) {
  margin: 0 4px 0 6px;
}

.tree {
  display: grid;
  gap: 8px;
  width: 124px;
  margin-top: 10px;
}
.tree li {
  display: flex;
  align-items: center;
  gap: 10px;
  height: 17px;
  padding-left: 37px;
}
.tree .root {
  gap: 5px;
  padding-left: 17px;
}
.node {
  display: flex;
  flex: 1;
  align-items: center;
  gap: 12px;
  height: 17px;
  min-width: 0;
  padding-left: 3px;
  overflow: hidden;
  background: #f1f1f1;
}
.deep .node {
  gap: 14px;
}
.root .node {
  gap: 14px;
  color: #fff;
  background: #929292;
}
.bulb {
  display: flex;
  justify-content: center;
  width: 20px;
  margin-left: 3px;
  background: #f1f1f1;
}
.on {
  color: #ffe34d;
}
.off {
  color: #c2d8fb;
}

/* view cube */
.viewcube {
  position: absolute;
  top: 39px;
  right: 37px;
}
.face {
  width: 54px;
  height: 54px;
  border: 1px solid #999;
  border-radius: 2px;
  font: bold 12px/52px Roboto, sans-serif;
  text-align: center;
  color: #8c8f93;
  background: linear-gradient(#e6e6e6, #d6d6d6);
  box-shadow: 0 3px 4px #bbb;
}
.viewcube span {
  position: absolute;
  font-size: 14px;
}
.axis-y {
  top: -16px;
  left: 0;
  color: #86ee86;
}
.axis-x {
  top: 42px;
  left: 57px;
  color: #f57f7f;
}
.axis-z {
  top: 49px;
  left: -7px;
  color: #6262e8;
}

/* bottom of the canvas */
.bottom-row {
  position: relative;
  display: flex;
  align-items: center;
  padding-bottom: 5px;
}
.comments {
  width: 311px;
  padding-left: 26px;
}
.navbar {
  display: flex;
  align-items: center;
  gap: 8px;
  width: 263px;
  height: 25px;
  margin-left: 361px;
  padding-left: 3px;
  background: #f1f1f1;
}
.navbar .caret {
  margin-left: 2px;
}
.display {
  margin-left: 8px;
}

/* timeline */
.timeline {
  display: flex;
  align-items: center;
  gap: 13px;
  height: 53px;
  padding: 0 13px 0 6px;
  border-top: 3px solid #d0d0d0;
  border-bottom: 1px solid #bbb;
  background: #f1f1f1;
}
.feature {
  margin-left: 10px;
}
.settings {
  margin-left: auto;
}

/* windows taskbar */
.taskbar {
  display: flex;
  height: 42px;
  font: 12px/16px "Open Sans", sans-serif;
  color: #fff;
  background: #101010;
}
.start {
  width: 45px;
  padding-right: 5px;
}
.search {
  display: flex;
  align-items: center;
  width: 357px;
  padding: 0 15px 0 9px;
  background: #f1f1f1;
}
.search input {
  flex: 1;
  min-width: 0;
  padding: 0 10px;
  border: 0;
  font: 14px/20px "Open Sans", sans-serif;
  background: none;
}
.search input::placeholder {
  color: #333;
  opacity: 1;
}
.pinned {
  display: grid;
  grid-template-columns: repeat(10, 1fr);
  width: 516px;
}
.running {
  background: linear-gradient(#b5dcf5, #b5dcf5) bottom / 43px 3px no-repeat;
}
.running.stack {
  background: linear-gradient(90deg, #b5dcf5 78%, #8299a8 78%) bottom / 43px 3px no-repeat;
}
.running.focused {
  border-bottom: 3px solid #b5dcf5;
  padding-top: 3px;
  background: #454545;
}
.tray {
  display: flex;
  align-items: center;
  gap: 10px;
  margin-left: auto;
  margin-right: 4px;
  padding-right: 12px;
  border-right: 1px solid #666;
}
.people {
  margin-right: 14px;
}
.lang {
  margin-left: 1px;
}
.clock {
  flex-direction: column;
  gap: 3px;
  margin: 0 9px 0 3px;
}
.notices {
  position: relative;
  width: 26px;
  padding-right: 10px;
}
.notices b {
  position: absolute;
  top: 6px;
  left: 8px;
  width: 16px;
  height: 16px;
  border: 1px solid #888;
  border-radius: 50%;
  font-size: 10px;
  line-height: 14px;
  background: #333;
}
```
